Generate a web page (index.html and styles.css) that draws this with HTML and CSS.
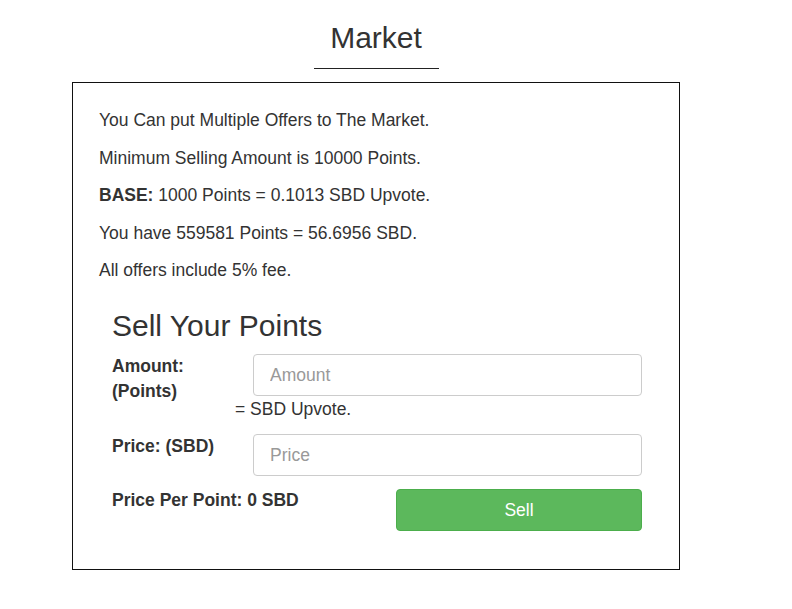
FILE: index.html
```html
<!DOCTYPE html>
<html>
<head>
<meta charset="utf-8">
<link rel="stylesheet" href="styles.css">
</head>
<body>
<div class="page">
  <div class="title-wrap">
    <h2 class="title">Market</h2>
  </div>
  <div class="card">
    <p class="info">You Can put Multiple Offers to The Market.</p>
    <p class="info">Minimum Selling Amount is 10000 Points.</p>
    <p class="info"><b>BASE:</b> 1000 Points = 0.1013 SBD Upvote.</p>
    <p class="info">You have 559581 Points = 56.6956 SBD.</p>
    <p class="info">All offers include 5% fee.</p>
    <div class="sell">
      <h3 class="sell-title">Sell Your Points</h3>
      <div class="row">
        <label class="lbl">Amount:<br>(Points)</label>
        <div class="col">
          <input class="field" type="text" placeholder="Amount">
          <div class="hint">= SBD Upvote.</div>
        </div>
      </div>
      <div class="row row-price">
        <label class="lbl">Price: (SBD)</label>
        <div class="col">
          <input class="field" type="text" placeholder="Price">
        </div>
      </div>
      <div class="row row-bottom">
        <div class="lbl ppp">Price Per Point: 0 SBD</div>
        <button class="btn" type="button">Sell</button>
      </div>
    </div>
  </div>
</div>
</body>
</html>
```
FILE: styles.css
```css
html, body {
  margin: 0;
  padding: 0;
  background: #fff;
}
body {
  font-family: "Liberation Sans", Arial, sans-serif;
  font-size: 17.5px;
  color: #333;
}
.page {
  width: 608px;
  margin-left: 72px;
  padding-top: 21px;
}
.title-wrap {
  display: flex;
  justify-content: center;
}
.title {
  margin: 0;
  width: 125px;
  text-align: center;
  font-size: 30px;
  font-weight: 400;
  line-height: 33px;
  padding-bottom: 14px;
  border-bottom: 1px solid #222;
}
.card {
  margin-top: 13px;
  border: 1px solid #111;
  padding: 26px 37px 38px 26px;
}
.info {
  margin: 0 0 15.5px;
  line-height: 22px;
}
.sell {
  padding-left: 13px;
  margin-top: 27.5px;
}
.sell-title {
  margin: 0 0 12.5px;
  font-size: 30px;
  font-weight: 400;
  line-height: 33px;
}
.row {
  display: flex;
  align-items: flex-start;
}
.lbl {
  width: 141px;
  flex: none;
  font-weight: 700;
  line-height: 25px;
}
.col {
  flex: 1;
  display: flex;
  flex-direction: column;
}
.field {
  width: 100%;
  height: 42px;
  box-sizing: border-box;
  border: 1px solid #ccc;
  border-radius: 4px;
  padding: 0 16px;
  font-family: inherit;
  font-size: 17.5px;
  color: #555;
  margin: 0;
  outline: none;
}
.field::placeholder {
  color: #999;
}
.hint {
  margin-left: -18px;
  margin-top: 2px;
  line-height: 22px;
}
.row-price {
  margin-top: 14px;
}
.row-bottom {
  margin-top: 12px;
  justify-content: space-between;
}
.ppp {
  width: auto;
}
.btn {
  width: 246px;
  height: 42px;
  margin-top: 1px;
  background: #5cb85c;
  border: 1px solid #4cae4c;
  border-radius: 4px;
  color: #fff;
  font-family: inherit;
  font-size: 17.5px;
  padding: 0;
}
```
